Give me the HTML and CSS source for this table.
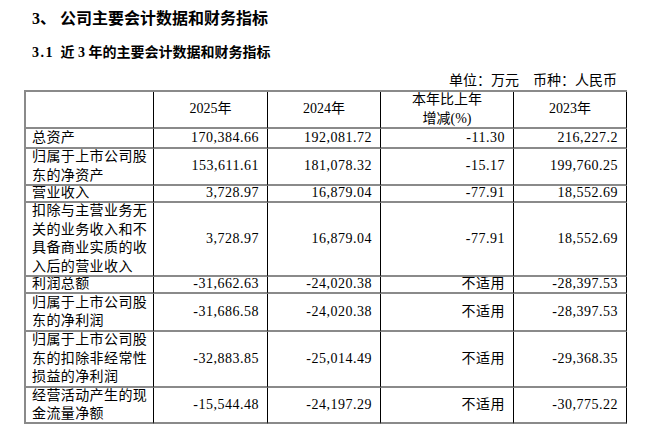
FILE: index.html
```html
<!DOCTYPE html>
<html lang="zh-CN">
<head>
<meta charset="utf-8">
<link rel="stylesheet" href="styles.css">
</head>
<body>
<div class="page">
  <h1 class="h1">3、 公司主要会计数据和财务指标</h1>
  <h2 class="h2"><span class="secnum">3.1</span> 近 3 年的主要会计数据和财务指标</h2>
  <div class="unit">单位：万元&emsp;币种：人民币</div>
  <div class="table">
    <div class="cell"></div>
    <div class="cell hd">2025年</div>
    <div class="cell hd">2024年</div>
    <div class="cell hd">本年比上年<br>增减(%)</div>
    <div class="cell hd">2023年</div>

    <div class="cell lbl">总资产</div>
    <div class="cell num">170,384.66</div>
    <div class="cell num">192,081.72</div>
    <div class="cell num">-11.30</div>
    <div class="cell num">216,227.2</div>

    <div class="cell lbl">归属于上市公司股东的净资产</div>
    <div class="cell num">153,611.61</div>
    <div class="cell num">181,078.32</div>
    <div class="cell num">-15.17</div>
    <div class="cell num">199,760.25</div>

    <div class="cell lbl">营业收入</div>
    <div class="cell num">3,728.97</div>
    <div class="cell num">16,879.04</div>
    <div class="cell num">-77.91</div>
    <div class="cell num">18,552.69</div>

    <div class="cell lbl">扣除与主营业务无关的业务收入和不具备商业实质的收入后的营业收入</div>
    <div class="cell num">3,728.97</div>
    <div class="cell num">16,879.04</div>
    <div class="cell num">-77.91</div>
    <div class="cell num">18,552.69</div>

    <div class="cell lbl">利润总额</div>
    <div class="cell num">-31,662.63</div>
    <div class="cell num">-24,020.38</div>
    <div class="cell num">不适用</div>
    <div class="cell num">-28,397.53</div>

    <div class="cell lbl">归属于上市公司股东的净利润</div>
    <div class="cell num">-31,686.58</div>
    <div class="cell num">-24,020.38</div>
    <div class="cell num">不适用</div>
    <div class="cell num">-28,397.53</div>

    <div class="cell lbl">归属于上市公司股东的扣除非经常性损益的净利润</div>
    <div class="cell num">-32,883.85</div>
    <div class="cell num">-25,014.49</div>
    <div class="cell num">不适用</div>
    <div class="cell num">-29,368.35</div>

    <div class="cell lbl">经营活动产生的现金流量净额</div>
    <div class="cell num">-15,544.48</div>
    <div class="cell num">-24,197.29</div>
    <div class="cell num">不适用</div>
    <div class="cell num">-30,775.22</div>
  </div>
</div>
</body>
</html>
```

FILE: styles.css
```css
html, body {
  margin: 0;
  padding: 0;
  background: #fff;
}

body {
  color: #000;
  font-family: "Liberation Serif", "Noto Sans CJK SC", serif;
}

.page {
  width: 665px;
  height: 424px;
  overflow: hidden;
  padding-left: 24px;
  box-sizing: border-box;
}

.h1 {
  margin: 8px 0 0 8px;
  font-size: 16px;
  line-height: 22px;
  font-weight: bold;
}

.h2 {
  margin: 13px 0 0 8px;
  font-size: 14px;
  line-height: 20px;
  font-weight: bold;
}

.secnum {
  letter-spacing: 1.5px;
  margin-right: 3px;
}

.unit {
  margin-top: 9px;
  width: 593px;
  text-align: right;
  font-size: 14px;
  line-height: 18px;
}

.table {
  display: grid;
  grid-template-columns: 128px 114px 113px 133px 113px;
  grid-template-rows: 37px 20px 37px 17px 74px 17px 38px 56px 36px;
  width: max-content;
  border-top: 2px solid #8a8a8a;
  border-left: 2px solid #8a8a8a;
  font-size: 14px;
  line-height: 18.5px;
}

.cell {
  box-sizing: border-box;
  border-right: 1px solid #000;
  border-bottom: 2px solid #8a8a8a;
  display: flex;
  align-items: center;
  overflow: hidden;
}

.hd {
  justify-content: center;
  text-align: center;
}

.lbl {
  padding-left: 6px;
  padding-right: 4px;
  letter-spacing: 0.4px;
}

.num {
  justify-content: flex-end;
  text-align: right;
  padding-right: 8px;
  letter-spacing: 0.5px;
}
```
